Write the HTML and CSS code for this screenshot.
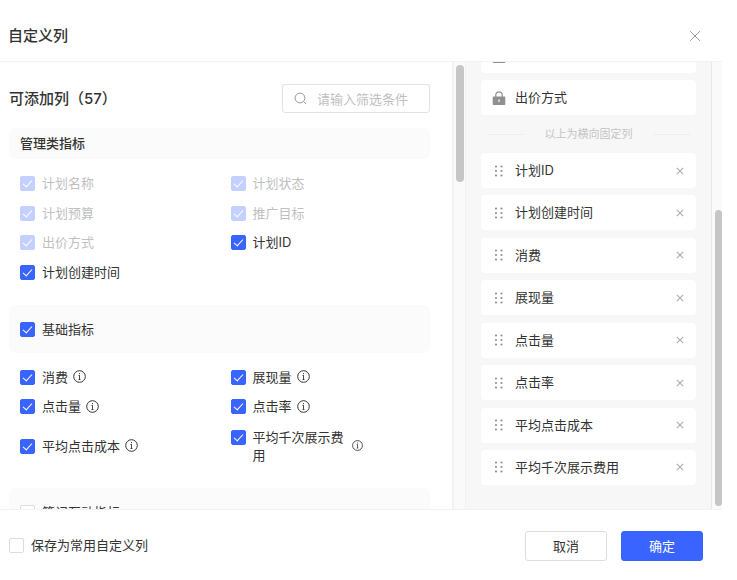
FILE: index.html
```html
<!DOCTYPE html>
<html lang="zh-CN">
<head>
<meta charset="utf-8">
<meta name="viewport" content="width=device-width, initial-scale=1">
<title>自定义列</title>
<link rel="stylesheet" href="styles.css">
</head>
<body>
<svg class="sprite" aria-hidden="true">
  <symbol id="info" viewBox="0 0 13 13">
    <circle cx="6.5" cy="6.5" r="5.8" fill="none" stroke="currentColor"/>
    <path d="M6.5 3v1.2M6.5 5.2v4.3M5.5 5.5h1M5.5 9.5h2" fill="none" stroke="currentColor" stroke-width=".9"/>
  </symbol>
  <symbol id="lock" viewBox="0 0 14 14">
    <path d="M3.8 6V4a3.2 3.2 0 0 1 6.4 0v2" fill="none" stroke="currentColor" stroke-width="1.2"/>
    <path fill-rule="evenodd" fill="currentColor" d="M1.500 5.500h11a.8.8 0 0 1 .8.8v6.900a.8.8 0 0 1-.8.8h-11a.8.8 0 0 1-.8-.8V6.300a.8.8 0 0 1 .8-.8zM6.400 8.400v2.600h1.200V8.400z"/>
  </symbol>
  <symbol id="drag" viewBox="0 0 14 14">
    <g fill="currentColor"><circle cx="4" cy="2.500" r="1.100"/><circle cx="9.500" cy="2.500" r="1.100"/><circle cx="4" cy="7" r="1.100"/><circle cx="9.500" cy="7" r="1.100"/><circle cx="4" cy="11.500" r="1.100"/><circle cx="9.500" cy="11.500" r="1.100"/></g>
  </symbol>
  <symbol id="remove" viewBox="0 0 14 14">
    <path d="M3.800 3.800l6.400 6.400M10.200 3.800l-6.400 6.400" fill="none" stroke="currentColor" stroke-width="1.200"/>
  </symbol>
</svg>
<div class="dialog" role="dialog" aria-labelledby="dialog-title">
  <header class="header">
    <h1 class="title" id="dialog-title">自定义列</h1>
    <button class="close" type="button" aria-label="关闭">
      <svg width="12" height="12" viewBox="0 0 12 12"><path d="M1.200 1.200l9.600 9.600M10.800 1.200l-9.600 9.600" fill="none" stroke="currentColor"/></svg>
    </button>
  </header>
  <main class="main">
    <section class="available">
      <div class="toolbar">
        <h2 class="title">可添加列（57）</h2>
        <label class="search">
          <svg width="13" height="13" viewBox="0 0 13 13"><circle cx="6" cy="6" r="4.900" fill="none" stroke="currentColor"/><path d="M9.500 9.500l2.500 2.500" stroke="currentColor"/></svg>
          <input type="text" placeholder="请输入筛选条件" aria-label="筛选条件">
        </label>
      </div>
      <div class="group">
        <h3 class="group-name">管理类指标</h3>
        <div class="options">
          <label class="option"><input type="checkbox" checked disabled><span>计划名称</span></label>
          <label class="option"><input type="checkbox" checked disabled><span>计划状态</span></label>
          <label class="option"><input type="checkbox" checked disabled><span>计划预算</span></label>
          <label class="option"><input type="checkbox" checked disabled><span>推广目标</span></label>
          <label class="option"><input type="checkbox" checked disabled><span>出价方式</span></label>
          <label class="option"><input type="checkbox" checked><span>计划ID</span></label>
          <label class="option"><input type="checkbox" checked><span>计划创建时间</span></label>
        </div>
      </div>
      <div class="group">
        <div class="group-toggle"><label class="option"><input type="checkbox" checked><span>基础指标</span></label></div>
        <div class="options metrics">
          <label class="option"><input type="checkbox" checked><span>消费</span><svg class="info"><use href="#info"/></svg></label>
          <label class="option"><input type="checkbox" checked><span>展现量</span><svg class="info"><use href="#info"/></svg></label>
          <label class="option"><input type="checkbox" checked><span>点击量</span><svg class="info"><use href="#info"/></svg></label>
          <label class="option"><input type="checkbox" checked><span>点击率</span><svg class="info"><use href="#info"/></svg></label>
          <label class="option"><input type="checkbox" checked><span>平均点击成本</span><svg class="info"><use href="#info"/></svg></label>
          <label class="option"><input type="checkbox" checked><span>平均千次展示费用</span><svg class="info info-small"><use href="#info"/></svg></label>
        </div>
      </div>
      <div class="group">
        <div class="group-toggle"><label class="option"><input type="checkbox"><span>笔记互动指标</span></label></div>
      </div>
    </section>
    <div class="track track-left"><div class="thumb thumb-left"></div></div>
    <section class="selected" aria-label="已选列">
      <ul class="list pinned">
        <li class="card"><svg class="icon"><use href="#lock"/></svg></li>
        <li class="card"><svg class="icon"><use href="#lock"/></svg><span>出价方式</span></li>
      </ul>
      <p class="divider">以上为横向固定列</p>
      <ul class="list sortable">
        <li class="card"><svg class="icon"><use href="#drag"/></svg><span>计划ID</span><button type="button" class="remove" aria-label="移除计划ID"><svg class="icon"><use href="#remove"/></svg></button></li>
        <li class="card"><svg class="icon"><use href="#drag"/></svg><span>计划创建时间</span><button type="button" class="remove" aria-label="移除计划创建时间"><svg class="icon"><use href="#remove"/></svg></button></li>
        <li class="card"><svg class="icon"><use href="#drag"/></svg><span>消费</span><button type="button" class="remove" aria-label="移除消费"><svg class="icon"><use href="#remove"/></svg></button></li>
        <li class="card"><svg class="icon"><use href="#drag"/></svg><span>展现量</span><button type="button" class="remove" aria-label="移除展现量"><svg class="icon"><use href="#remove"/></svg></button></li>
        <li class="card"><svg class="icon"><use href="#drag"/></svg><span>点击量</span><button type="button" class="remove" aria-label="移除点击量"><svg class="icon"><use href="#remove"/></svg></button></li>
        <li class="card"><svg class="icon"><use href="#drag"/></svg><span>点击率</span><button type="button" class="remove" aria-label="移除点击率"><svg class="icon"><use href="#remove"/></svg></button></li>
        <li class="card"><svg class="icon"><use href="#drag"/></svg><span>平均点击成本</span><button type="button" class="remove" aria-label="移除平均点击成本"><svg class="icon"><use href="#remove"/></svg></button></li>
        <li class="card"><svg class="icon"><use href="#drag"/></svg><span>平均千次展示费用</span><button type="button" class="remove" aria-label="移除平均千次展示费用"><svg class="icon"><use href="#remove"/></svg></button></li>
      </ul>
    </section>
    <div class="track track-right"><div class="thumb thumb-right"></div></div>
  </main>
  <footer class="footer">
    <label class="option save"><input type="checkbox"><span>保存为常用自定义列</span></label>
    <button type="button" class="btn">取消</button>
    <button type="button" class="btn btn-primary">确定</button>
  </footer>
</div>
</body>
</html>
```

FILE: styles.css
```css
* {
  box-sizing: border-box;
}

body {
  margin: 0;
  background: #fff;
  color: #333;
  font: 13px/18px Inter, "Noto Sans CJK SC", sans-serif;
}

h1, h2, h3, p, ul {
  margin: 0;
  padding: 0;
}

button, input {
  font: inherit;
  color: inherit;
}

svg {
  display: block;
  flex: none;
}

.sprite {
  display: none;
}

.dialog {
  display: flex;
  flex-direction: column;
  height: 100vh;
  margin-right: 15px;
}

.header {
  display: flex;
  align-items: center;
  justify-content: space-between;
  padding: 24px 21px 14px 8px;
  border-bottom: 1px solid #f2f2f2;
}

.title {
  font-size: 15px;
  line-height: 23px;
  font-weight: 500;
}

.close, .remove {
  padding: 0;
  border: 0;
  background: none;
}

.close {
  color: #999;
}

.main {
  display: flex;
  flex: 1;
  min-height: 0;
}

.available {
  flex: 1;
  min-width: 0;
  padding: 22px 22px 0 9px;
  overflow: hidden;
}

.toolbar {
  display: flex;
  align-items: center;
  justify-content: space-between;
  margin-bottom: 15px;
}

.search {
  display: flex;
  align-items: center;
  gap: 10px;
  width: 148px;
  height: 29px;
  padding: 0 11px;
  border: 1px solid #e2e2e2;
  border-radius: 3px;
  color: #999;
}

.search input {
  flex: 1;
  min-width: 0;
  padding: 0;
  border: 0;
  outline: 0;
  background: none;
}

.search input::placeholder {
  color: #bfbfbf;
}

.group {
  margin-bottom: 18px;
}

.group-name, .group-toggle {
  border-radius: 6px;
  background: #fbfbfb;
}

.group-name {
  padding: 6px 11px 7px;
  font-size: 13px;
  font-weight: 500;
}

.group-toggle {
  padding: 15px 0;
}

.options {
  display: grid;
  grid-template-columns: 1fr 1fr;
  grid-auto-rows: 1fr;
  align-items: center;
  height: 119px;
  margin-top: 9px;
}

.metrics {
  grid-template-rows: 29px 30px 1fr;
  height: 108px;
}

.option {
  display: flex;
  align-items: flex-start;
  padding-left: 11px;
}

.option span {
  max-width: 94px;
  margin-left: 7px;
}

.option input {
  display: flex;
  justify-content: center;
  appearance: none;
  flex: none;
  width: 15px;
  height: 15px;
  margin: 2px 0 0;
  border: 1px solid #ddd;
  border-radius: 2px;
  background: #fff;
}

.option input:checked {
  border-color: #3a64ff;
  background: #3a64ff;
}

.option input:checked::after {
  content: "";
  width: 4px;
  height: 8px;
  margin-top: 1px;
  border: solid #fff;
  border-width: 0 1px 1px 0;
  transform: rotate(42deg);
}

.option input:checked:disabled {
  border-color: #c4d0ff;
  background: #c4d0ff;
}

.option input:disabled + span {
  color: #bfbfbf;
}

.info {
  align-self: center;
  width: 13px;
  height: 13px;
  margin-left: 5px;
}

.info-small {
  width: 11px;
  height: 11px;
}

.track {
  flex: none;
  background: #fafafa;
}

.track-left {
  width: 14px;
  padding: 3px 2px;
  border-left: 2px solid #f2f2f2;
  border-right: 1px solid #f2f2f2;
}

.track-right {
  display: flex;
  flex-direction: column;
  justify-content: flex-end;
  width: 11px;
  padding: 3px 0 3px 3px;
  border-left: 1px solid #e8e8e8;
}

.thumb {
  border-radius: 4px;
  background: #c6c6c6;
}

.thumb-left {
  width: 8px;
  height: 117px;
}

.thumb-right {
  height: 296px;
}

.selected {
  display: flex;
  flex-direction: column;
  justify-content: flex-end;
  width: 245px;
  padding: 0 15px 24px;
  overflow: hidden;
  background: #f7f7f7;
}

.list {
  display: flex;
  flex: none;
  flex-direction: column;
  list-style: none;
}

.pinned {
  gap: 7px;
}

.sortable {
  justify-content: space-between;
  height: 332px;
}

.card {
  display: flex;
  align-items: center;
  gap: 9px;
  height: 35px;
  padding: 0 9px 0 11px;
  border-radius: 4px;
  background: #fff;
}

.card span {
  flex: 1;
  padding-bottom: 1px;
}

.icon {
  width: 14px;
  height: 14px;
  color: #909090;
}

.remove .icon {
  color: #b0b0b0;
}

.divider {
  display: flex;
  align-items: center;
  gap: 21px;
  padding: 10px 6px;
  color: #c4c4c4;
  font-size: 11px;
}

.divider::before, .divider::after {
  content: "";
  flex: 1;
  height: 1px;
  background: #eee;
}

.footer {
  display: flex;
  align-items: center;
  gap: 14px;
  padding: 21px 19px 19px 9px;
  border-top: 1px solid #f2f2f2;
}

.save {
  flex: 1;
  padding: 0 0 2px;
}

.save span {
  max-width: none;
}

.btn {
  width: 82px;
  height: 30px;
  padding: 0 0 1px;
  border: 1px solid #ddd;
  border-radius: 3px;
  background: #fff;
}

.btn-primary {
  border-color: #3a64ff;
  background: #3a64ff;
  color: #fff;
}
```
